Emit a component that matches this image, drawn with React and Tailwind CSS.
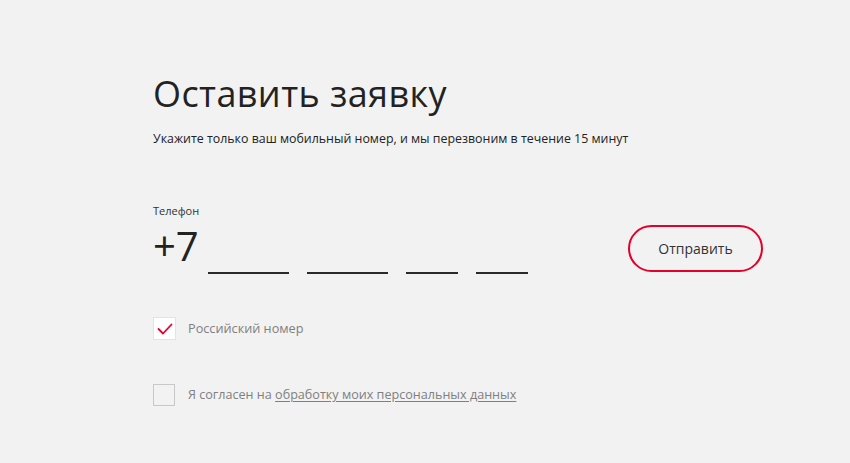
export default function App() {
  const font = { fontFamily: '"Open Sans", "Noto Sans", sans-serif' };
  return (
    <div className="w-[850px] h-[463px] bg-[#f2f2f2] overflow-hidden" style={font}>
      <div className="pl-[153px] pt-[72px] flex flex-col">
        <h1 className="text-[36px] leading-[44px] text-[#222222] font-normal tracking-[0.4px]">Оставить заявку</h1>
        <p className="mt-[14px] text-[12.4px] leading-[18px] text-[#222222]">
          Укажите только ваш мобильный номер, и мы перезвоним в течение 15 минут
        </p>
        <div className="mt-[56px] text-[11px] leading-[14px] text-[#333333]">Телефон</div>
        <div className="flex items-end mt-[6px] w-[610px]">
          <div className="text-[40px] leading-[44px] text-[#222222]">+7</div>
          <div className="flex items-end gap-[18px] ml-[9px] mb-[-6px]">
            <div className="w-[81px] h-[2px] bg-[#2a2a2a]" />
            <div className="w-[81px] h-[2px] bg-[#2a2a2a]" />
            <div className="w-[52px] h-[2px] bg-[#2a2a2a]" />
            <div className="w-[52px] h-[2px] bg-[#2a2a2a]" />
          </div>
          <div className="ml-auto mb-[-4px] w-[135px] h-[47px] rounded-full border-2 border-[#e4002b] flex items-center justify-center text-[14px] text-[#333333]">
            Отправить
          </div>
        </div>
        <div className="mt-[49px] flex items-center gap-[12px]">
          <div className="w-[23px] h-[23px] bg-white border border-[#e3e3e3] flex items-center justify-center">
            <svg width="16" height="12" viewBox="0 0 16 12" fill="none">
              <path d="M1.5 6 L6 10.5 L14.5 1.5" stroke="#e4002b" strokeWidth="1.8" strokeLinecap="round" strokeLinejoin="round" />
            </svg>
          </div>
          <span className="text-[12.7px] text-[#808080]">Российский номер</span>
        </div>
        <div className="mt-[44px] flex items-center gap-[13px]">
          <div className="w-[22px] h-[22px] border-[1.5px] border-[#c8c8c8]" />
          <span className="text-[12.6px] text-[#808080]">
            Я согласен на <span className="underline underline-offset-2">обработку моих персональных данных</span>
          </span>
        </div>
      </div>
    </div>
  );
}
